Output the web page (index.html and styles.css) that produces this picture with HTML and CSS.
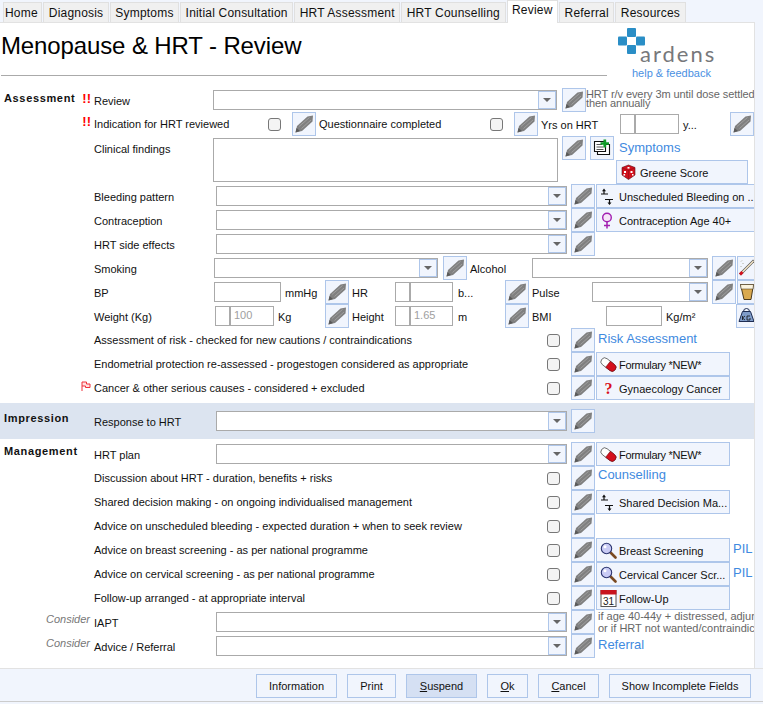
FILE: index.html
```html
<!DOCTYPE html>
<html lang="en">
<head>
<meta charset="utf-8">
<title>Menopause &amp; HRT - Review</title>
<link rel="stylesheet" href="styles.css">
</head>
<body>
<svg class="defs" aria-hidden="true">
  <symbol id="pencil" viewBox="1 1 22 22">
    <path d="M3.500 20.500 L5 14 L15.500 4.500 L21 3.500 L20.500 9.500 L10 19 Z" fill="#808080"/>
    <path d="M7 14.500 L17.500 5.500 M9.500 16.500 L19 8" stroke="#a3a3a3" stroke-width=".9" fill="none"/>
    <path d="M3.500 20.500 L4.500 16 L8 19 Z" fill="#5a5a5a"/>
  </symbol>
  <symbol id="pill" viewBox="0 0 17 17">
    <g transform="rotate(38 8.500 8.500)">
      <rect x="0" y="4.800" width="17" height="7.600" rx="3.800" fill="#fff" stroke="#444" stroke-width=".7"/>
      <path d="M8 4.800 H13.200 A3.800 3.800 0 0 1 13.200 12.400 H8 Z" fill="#d40f1c" stroke="#7a0810" stroke-width=".6"/>
    </g>
  </symbol>
  <symbol id="lens" viewBox="0 0 17 17">
    <path d="M10.500 10.500 L15.500 15.500" stroke="#7a4a22" stroke-width="2.600" stroke-linecap="round"/>
    <circle cx="6.500" cy="6.500" r="5.200" fill="#c9cbf5" stroke="#2c3570" stroke-width="1.100"/>
    <circle cx="5" cy="4.800" r="1.500" fill="#fff"/>
  </symbol>
  <symbol id="updown" viewBox="0 0 17 17">
    <path d="M1 6 H8 M5 11.500 H13 M4 5.500 V2 M9.500 12 V15.500" stroke="#111" stroke-width="1.200" fill="none"/>
    <path d="M2 3.200 L4 .5 L6 3.200 Z M7.500 14.500 L9.500 17 L11.500 14.500 Z" fill="#111"/>
  </symbol>
</svg>

<nav class="tabs">
  <span class="tab tab-first">Home</span><span class="tab">Diagnosis</span><span class="tab">Symptoms</span><span class="tab">Initial Consultation</span><span class="tab">HRT Assessment</span><span class="tab">HRT Counselling</span><span class="tab tab-active">Review</span><span class="tab">Referral</span><span class="tab">Resources</span>
</nav>

<main class="panel">
  <header class="head">
    <div class="head-title"><h1 class="title">Menopause &amp; HRT - Review</h1></div>
    <div class="logo">
      <svg class="logo-cross" viewBox="0 0 27 26" aria-hidden="true">
        <rect x="9" y="0" width="9" height="9" rx="1" fill="#2a8ec6"/>
        <rect x="0" y="8.500" width="9" height="9" rx="1" fill="#2a8ec6"/>
        <rect x="18" y="8.500" width="9" height="9" rx="1" fill="#2a8ec6"/>
        <rect x="9" y="17" width="9" height="9" rx="1" fill="#2a8ec6"/>
      </svg>
      <span class="logo-word">ardens</span>
      <span class="logo-help">help &amp; feedback</span>
    </div>
  </header>

  <section class="group">
    <h2 class="heading">Assessment</h2>

    <div class="row">
      <span class="gut"><b class="mark">!!</b></span>
      <span class="lbl w119">Review</span>
      <span class="combo w344"><i class="drop"></i></span>
      <span class="pen ml5"><svg><use href="#pencil"/></svg></span>
      <span class="note">HRT r/v every 3m until dose settled<br>then annually</span>
    </div>

    <div class="row">
      <span class="gut"><b class="mark mark-up">!!</b></span>
      <span class="lbl lbl-c w174">Indication for HRT reviewed</span>
      <span class="check"></span>
      <span class="pen ml11"><svg><use href="#pencil"/></svg></span>
      <span class="lbl lbl-c w171 ml3">Questionnaire completed</span>
      <span class="check"></span>
      <span class="pen ml11"><svg><use href="#pencil"/></svg></span>
      <span class="lbl w79 ml3">Yrs on HRT</span>
      <span class="spin w59"><i class="spin-a"></i><i class="spin-b"></i></span>
      <span class="lbl w47 ml4">y...</span>
      <span class="pen"><svg><use href="#pencil"/></svg></span>
    </div>

    <div class="row row-tall">
      <span class="gut"></span>
      <span class="lbl lbl-top w119">Clinical findings</span>
      <span class="area"></span>
      <span class="pen ml4"><svg><use href="#pencil"/></svg></span>
      <span class="pen ml4">
        <svg viewBox="1 1 22 22">
          <path d="M7.500 8.500 H19.500 V18.500 H7.500 Z" fill="#fff" stroke="#111" stroke-width="1.100"/>
          <path d="M4.500 5.500 H15.500 V15.500 H4.500 Z" fill="#fff" stroke="#111" stroke-width="1.100"/>
          <path d="M6.500 8.500 H12 M6.500 11 H13.500 M6.500 13.500 H13.500" stroke="#555" stroke-width="1"/>
          <path d="M10.500 7.500 H19 M14.800 3.500 V11.500" stroke="#0f9a28" stroke-width="2.700"/>
        </svg>
      </span>
      <div class="stack">
        <a class="link link-sym">Symptoms</a>
        <button class="act w132 act-greene">
          <svg class="ic ic-wide" viewBox="-1.500 -1 17 17">
            <path d="M7 0 L13.500 2.500 V10 L7 14.500 L.500 10 V2.500 Z" fill="#d2101e" stroke="#5c0710" stroke-width=".6"/>
            <path d="M1 3 L7 5.500 L13 3 M7 5.500 V14" stroke="#8e0b16" stroke-width=".6" fill="none"/>
            <g fill="#fff"><rect x="6" y="2" width="2" height="1.600"/><rect x="2.500" y="6" width="2" height="2"/><rect x="2" y="9" width="1.600" height="1.600"/><rect x="9" y="6" width="2" height="2"/><rect x="10.500" y="9" width="1.500" height="1.500"/></g>
          </svg>Greene Score
        </button>
      </div>
    </div>

    <div class="row">
      <span class="gut"></span>
      <span class="lbl w122">Bleeding pattern</span>
      <span class="combo w351"><i class="drop"></i></span>
      <span class="pen ml4"><svg><use href="#pencil"/></svg></span>
      <button class="act act-open ml1"><svg class="ic"><use href="#updown"/></svg>Unscheduled Bleeding on ...</button>
    </div>

    <div class="row">
      <span class="gut"></span>
      <span class="lbl w122">Contraception</span>
      <span class="combo w351"><i class="drop"></i></span>
      <span class="pen ml4"><svg><use href="#pencil"/></svg></span>
      <button class="act act-open ml1">
        <svg class="ic" viewBox="0 0 17 17"><circle cx="7" cy="5.500" r="4.300" fill="#f6e6f8" stroke="#a11fb0" stroke-width="1.400"/><path d="M7 10 V16.500 M4 13.500 H10" stroke="#a11fb0" stroke-width="1.500"/></svg>Contraception Age 40+
      </button>
    </div>

    <div class="row">
      <span class="gut"></span>
      <span class="lbl w122">HRT side effects</span>
      <span class="combo w351"><i class="drop"></i></span>
      <span class="pen ml4"><svg><use href="#pencil"/></svg></span>
    </div>

    <div class="row">
      <span class="gut"></span>
      <span class="lbl w120">Smoking</span>
      <span class="combo w224"><i class="drop"></i></span>
      <span class="pen ml5"><svg><use href="#pencil"/></svg></span>
      <span class="lbl w62 ml3">Alcohol</span>
      <span class="combo w176"><i class="drop"></i></span>
      <span class="pen ml4"><svg><use href="#pencil"/></svg></span>
      <span class="side ml1">
        <svg viewBox="0 0 18 22"><path d="M2 17.500 L16 3.500" stroke="#555" stroke-width="2.600"/><path d="M2.500 17 L15.500 4" stroke="#f7e8c8" stroke-width="1.500"/><path d="M2 17.500 L4.500 15" stroke="#d3101e" stroke-width="3"/><path d="M2.500 10 L3.500 9 M4.500 7 L5.500 6 M3 4.500 L4 3.500" stroke="#b0b0a0" stroke-width="1"/></svg>
      </span>
    </div>

    <div class="row">
      <span class="gut"></span>
      <span class="lbl w120">BP</span>
      <span class="input w67"></span>
      <span class="lbl w40 ml4">mmHg</span>
      <span class="pen"><svg><use href="#pencil"/></svg></span>
      <span class="lbl w43 ml3">HR</span>
      <span class="spin w58"><i class="spin-a"></i><i class="spin-b"></i></span>
      <span class="lbl w47 ml5">b...</span>
      <span class="pen"><svg><use href="#pencil"/></svg></span>
      <span class="lbl w60 ml3">Pulse</span>
      <span class="combo w116"><i class="drop"></i></span>
      <span class="pen ml4"><svg><use href="#pencil"/></svg></span>
      <span class="side ml1">
        <svg viewBox="0 0 18 22"><path d="M2.500 3.500 H15.500 L13 18.500 H6 Z" fill="#d9a94f" stroke="#3a2a10" stroke-width=".9"/><path d="M2.500 3.500 H15.500 L15 8 H3.200 Z" fill="#fbf3df" stroke="#3a2a10" stroke-width=".5"/></svg>
      </span>
    </div>

    <div class="row">
      <span class="gut"></span>
      <span class="lbl w121">Weight (Kg)</span>
      <span class="spin w59"><i class="spin-a"></i><i class="spin-b">100</i></span>
      <span class="lbl w47 ml4">Kg</span>
      <span class="pen"><svg><use href="#pencil"/></svg></span>
      <span class="lbl w43 ml3">Height</span>
      <span class="spin w58"><i class="spin-a"></i><i class="spin-b">1.65</i></span>
      <span class="lbl w47 ml5">m</span>
      <span class="pen"><svg><use href="#pencil"/></svg></span>
      <span class="lbl w74 ml3">BMI</span>
      <span class="input w56"></span>
      <span class="lbl w70 ml4">Kg/m²</span>
      <span class="side">
        <svg viewBox="0 0 18 22"><path d="M6.500 6.500 A3 3 0 0 1 12.500 6.500" fill="none" stroke="#1d2c52" stroke-width="1"/><path d="M5.500 6.500 H13.500 L17 16.500 H2 Z" fill="#7f9cc9" stroke="#1d2c52" stroke-width="1"/><path d="M5.500 11 V15 M5.500 13 L8 11 M5.500 13 L8 15 M13 11 H10 V15 H13 V13" stroke="#111" stroke-width=".8" fill="none"/></svg>
      </span>
    </div>

    <div class="row">
      <span class="gut"></span>
      <span class="lbl lbl-c w453">Assessment of risk - checked for new cautions / contraindications</span>
      <span class="check"></span>
      <span class="pen ml11"><svg><use href="#pencil"/></svg></span>
      <a class="link ml3 link-up">Risk Assessment</a>
    </div>

    <div class="row">
      <span class="gut"></span>
      <span class="lbl lbl-c w453">Endometrial protection re-assessed - progestogen considered as appropriate</span>
      <span class="check"></span>
      <span class="pen ml11"><svg><use href="#pencil"/></svg></span>
      <button class="act w134 ml1 tight"><svg class="ic"><use href="#pill"/></svg>Formulary *NEW*</button>
    </div>

    <div class="row">
      <span class="gut">
        <svg class="flag" viewBox="0 0 10 10"><path d="M1 10 V1 H5.500 V3 H9 V6.500 H4.500 V5 H1" fill="#ffe0e0" stroke="#f0303a" stroke-width="1"/></svg>
      </span>
      <span class="lbl lbl-c w453">Cancer &amp; other serious causes - considered + excluded</span>
      <span class="check"></span>
      <span class="pen ml11"><svg><use href="#pencil"/></svg></span>
      <button class="act w134 ml1"><b class="ic ic-q">?</b>Gynaecology Cancer</button>
    </div>
  </section>

  <section class="group group-band">
    <h2 class="heading heading-band">Impression</h2>
    <div class="row">
      <span class="gut"></span>
      <span class="lbl w122">Response to HRT</span>
      <span class="combo w351"><i class="drop"></i></span>
      <span class="pen ml4"><svg><use href="#pencil"/></svg></span>
    </div>
  </section>

  <section class="group">
    <h2 class="heading heading-mgmt">Management</h2>

    <div class="row">
      <span class="gut"></span>
      <span class="lbl w122">HRT plan</span>
      <span class="combo w351"><i class="drop"></i></span>
      <span class="pen ml4"><svg><use href="#pencil"/></svg></span>
      <button class="act w134 ml1 tight"><svg class="ic"><use href="#pill"/></svg>Formulary *NEW*</button>
    </div>

    <div class="row">
      <span class="gut"></span>
      <span class="lbl lbl-c w453">Discussion about HRT - duration, benefits + risks</span>
      <span class="check"></span>
      <span class="pen ml11"><svg><use href="#pencil"/></svg></span>
      <a class="link link-high ml3">Counselling</a>
    </div>

    <div class="row">
      <span class="gut"></span>
      <span class="lbl lbl-c w453">Shared decision making - on ongoing individualised management</span>
      <span class="check"></span>
      <span class="pen ml11"><svg><use href="#pencil"/></svg></span>
      <button class="act w134 ml1"><svg class="ic"><use href="#updown"/></svg>Shared Decision Ma...</button>
    </div>

    <div class="row">
      <span class="gut"></span>
      <span class="lbl lbl-c w453">Advice on unscheduled bleeding - expected duration + when to seek review</span>
      <span class="check"></span>
      <span class="pen ml11"><svg><use href="#pencil"/></svg></span>
    </div>

    <div class="row">
      <span class="gut"></span>
      <span class="lbl lbl-c w453">Advice on breast screening - as per national programme</span>
      <span class="check"></span>
      <span class="pen ml11"><svg><use href="#pencil"/></svg></span>
      <button class="act w134 ml1"><svg class="ic"><use href="#lens"/></svg>Breast Screening</button>
      <a class="link ml3 link-up">PIL</a>
    </div>

    <div class="row">
      <span class="gut"></span>
      <span class="lbl lbl-c w453">Advice on cervical screening - as per national programme</span>
      <span class="check"></span>
      <span class="pen ml11"><svg><use href="#pencil"/></svg></span>
      <button class="act w134 ml1"><svg class="ic"><use href="#lens"/></svg>Cervical Cancer Scr...</button>
      <a class="link ml3 link-up">PIL</a>
    </div>

    <div class="row">
      <span class="gut"></span>
      <span class="lbl lbl-c w453">Follow-up arranged - at appropriate interval</span>
      <span class="check"></span>
      <span class="pen ml11"><svg><use href="#pencil"/></svg></span>
      <button class="act w134 ml1">
        <svg class="ic" viewBox="0 0 17 17"><rect x="1" y=".5" width="15" height="16" fill="#fff" stroke="#555" stroke-width="1"/><rect x=".5" y="0" width="16" height="4.500" fill="#c8141e"/><text class="cal" x="8.500" y="14.500" text-anchor="middle">31</text></svg>Follow-Up
      </button>
    </div>

    <div class="row">
      <span class="gut"><em class="consider">Consider</em></span>
      <span class="lbl w122">IAPT</span>
      <span class="combo w351"><i class="drop"></i></span>
      <span class="pen ml4"><svg><use href="#pencil"/></svg></span>
      <span class="note note-wide">if age 40-44y + distressed, adjunct<br>or if HRT not wanted/contraindicated</span>
    </div>

    <div class="row">
      <span class="gut"><em class="consider">Consider</em></span>
      <span class="lbl w122">Advice / Referral</span>
      <span class="combo w351"><i class="drop"></i></span>
      <span class="pen ml4"><svg><use href="#pencil"/></svg></span>
      <a class="link ml3 link-up">Referral</a>
    </div>
  </section>
</main>

<footer class="foot">
  <button class="btn w81">Information</button>
  <button class="btn w49">Print</button>
  <button class="btn btn-on w71"><u>S</u>uspend</button>
  <button class="btn w41"><u>O</u>k</button>
  <button class="btn w61"><u>C</u>ancel</button>
  <button class="btn w142">Show Incomplete Fields</button>
</footer>
</body>
</html>
```

FILE: styles.css
```css
* { box-sizing: border-box; }

html, body {
  margin: 0;
  height: 100%;
}

body {
  width: 763px;
  height: 704px;
  overflow: hidden;
  background: #f1f5fd;
  color: #111;
  font: 11px/13px "Liberation Sans", Arial, sans-serif;
}

.defs { display: none; }

/* tabs */
.tabs {
  display: flex;
  align-items: flex-end;
  height: 22px;
  padding-left: 3px;
  font-size: 12px;
  letter-spacing: .2px;
}

.tab {
  height: 20px;
  padding: 3px 4.500px 0;
  margin-right: 1px;
  line-height: 15px;
  background: #f0f0f0;
  border: 1px solid #e0e0e0;
  border-bottom: 0;
  white-space: nowrap;
}

.tab-first { padding-left: 1px; padding-right: 3.500px; }

.tab-active {
  height: 23px;
  margin-bottom: -1px;
  position: relative;
  background: #fff;
  padding-top: 2px;
}

/* panel */
.panel {
  width: 755px;
  height: 646px;
  background: #fff;
  border-top: 1px solid #e2e2e2;
  border-right: 1px solid #e2e2e2;
  overflow: hidden;
}

.head {
  display: flex;
  height: 65px;
}

.head-title {
  width: 606px;
  height: 53px;
  margin: 0 2px 0 1px;
  border-bottom: 1px solid #aaa;
}

.title {
  margin: 8px 0 0;
  font-size: 24px;
  line-height: 30px;
  font-weight: 400;
  letter-spacing: -.12px;
  color: #000;
}

.logo {
  position: relative;
  flex: 1;
}

.logo-cross {
  position: absolute;
  left: 9px;
  top: 5px;
  width: 27px;
  height: 26px;
}

.logo-word {
  position: absolute;
  left: 31px;
  top: 17px;
  font: 400 22px/28px Lato, "Liberation Sans", sans-serif;
  letter-spacing: 2px;
  color: #77787b;
}

.logo-help {
  position: absolute;
  left: 23px;
  top: 44px;
  color: #4a90e2;
  white-space: nowrap;
}

/* groups and rows */
.group { position: relative; }

.group-band {
  margin: 3px 0;
  padding: 6px 0;
  height: 36px;
  background: #dce4f0;
}

.heading {
  position: absolute;
  left: 4px;
  top: 3px;
  margin: 0;
  font-size: 11px;
  line-height: 14px;
  font-weight: 700;
  letter-spacing: .65px;
}

.heading-band { top: 8px; }
.heading-mgmt { top: 2px; }

.row {
  display: flex;
  align-items: center;
  height: 24px;
  white-space: nowrap;
}

.row-tall {
  height: 48px;
  align-items: flex-start;
}

.gut {
  position: relative;
  flex: none;
  align-self: stretch;
  width: 94px;
}

.mark {
  position: absolute;
  right: 3px;
  top: 4px;
  color: #f00;
  font-size: 13px;
}

.mark-up { top: 3px; }

.flag {
  position: absolute;
  left: 81px;
  top: 5px;
  width: 10px;
  height: 10px;
}

.consider {
  position: absolute;
  right: 4px;
  top: 3px;
  color: #777;
}

.lbl {
  flex: none;
  padding-top: 2px;
}

.lbl-c { padding-top: 0; }
.lbl-top { padding-top: 7px; }

.combo, .input, .spin, .area {
  flex: none;
  height: 20px;
  background: #fff;
  border: 1px solid #aaa;
}

.combo {
  display: flex;
  justify-content: flex-end;
}

.drop {
  position: relative;
  width: 18px;
  background: #f1f5fd;
  border: 1px solid #aec6ea;
}

.drop::after {
  content: "";
  position: absolute;
  left: 4px;
  top: 6px;
  border: 4px solid transparent;
  border-top: 4px solid #666;
  border-bottom: 0;
}

.spin {
  display: flex;
}

.spin-a {
  width: 15px;
  border-right: 2px solid #aaa;
}

.spin-b {
  padding: 2px 0 0 3px;
  color: #a0a0a0;
  font-style: normal;
}

.area {
  width: 345px;
  height: 44px;
  margin-top: 2px;
}

.check {
  flex: none;
  width: 13px;
  height: 13px;
  background: #f4f4f4;
  border: 1px solid #777;
  border-radius: 3px;
}

.pen, .side {
  flex: none;
  width: 24px;
  height: 24px;
  background: #f1f5fd;
  border: 1px solid #aec6ea;
}

.pen svg {
  display: block;
  width: 22px;
  height: 22px;
}

.side svg {
  display: block;
  width: 18px;
  height: 22px;
}

.note {
  align-self: flex-start;
  padding-top: 2px;
  color: #666;
  line-height: 9px;
  letter-spacing: -.08px;
}

.note-wide {
  margin-left: 3px;
  padding-top: 0;
  line-height: 12px;
  letter-spacing: 0;
}

.stack {
  display: flex;
  flex-direction: column;
  align-items: flex-start;
}

.link {
  flex: none;
  color: #3f8ae0;
  font-size: 13px;
  line-height: 16px;
}

.link-sym { margin: 4px 0 0 5px; height: 20px; }
.link-high { margin-top: -7px; }
.link-up { margin-top: -2px; }

.act {
  display: flex;
  align-items: center;
  flex: none;
  height: 24px;
  padding: 2px 0 0 3px;
  background: #f1f5fd;
  border: 1px solid #aec6ea;
  color: #111;
  font: inherit;
  text-align: left;
  white-space: nowrap;
}

.tight { letter-spacing: -.3px; }
.act-greene { margin-left: 2px; }
.act-open { width: 175px; }

.ic {
  flex: none;
  display: block;
  width: 17px;
  height: 17px;
  margin: -2px 2px 0 0;
}

.ic-wide { margin-right: 3px; }

.ic-q {
  color: #d80f1c;
  font: 700 16px/17px "Liberation Serif", serif;
  text-align: center;
}

.cal {
  font: 400 10px "Liberation Sans", sans-serif;
  fill: #222;
}

/* footer */
.foot {
  display: flex;
  justify-content: flex-start;
  gap: 10px;
  height: 34px;
  padding: 5px 0 0 256px;
  background: #f1f5fd;
  border-top: 1px solid #e2e2e2;
  border-bottom: 1px solid #ccc;
}

.btn {
  height: 24px;
  padding: 1px 0 0;
  background: #f1f5fd;
  border: 1px solid #aec6ea;
  color: #111;
  font: inherit;
}

.btn-on { background: #d5e0f3; }

/* widths and offsets */
.ml1 { margin-left: 1px; }
.ml3 { margin-left: 3px; }
.ml4 { margin-left: 4px; }
.ml5 { margin-left: 5px; }
.ml11 { margin-left: 11px; }
.w40 { width: 40px; }
.w41 { width: 41px; }
.w43 { width: 43px; }
.w47 { width: 47px; }
.w49 { width: 49px; }
.w56 { width: 56px; }
.w58 { width: 58px; }
.w59 { width: 59px; }
.w60 { width: 60px; }
.w61 { width: 61px; }
.w62 { width: 62px; }
.w67 { width: 67px; }
.w70 { width: 70px; }
.w71 { width: 71px; }
.w74 { width: 74px; }
.w79 { width: 79px; }
.w81 { width: 81px; }
.w116 { width: 116px; }
.w119 { width: 119px; }
.w120 { width: 120px; }
.w121 { width: 121px; }
.w122 { width: 122px; }
.w132 { width: 132px; }
.w134 { width: 134px; }
.w142 { width: 142px; }
.w171 { width: 171px; }
.w174 { width: 174px; }
.w176 { width: 176px; }
.w224 { width: 224px; }
.w344 { width: 344px; }
.w351 { width: 351px; }
.w453 { width: 453px; }
```
